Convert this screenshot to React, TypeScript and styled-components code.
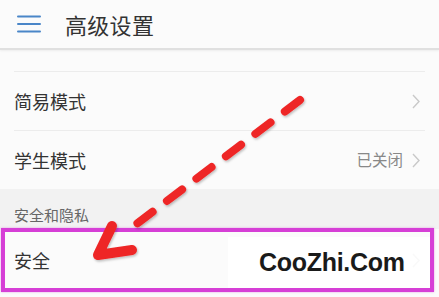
import React from "react";
import styled, { createGlobalStyle } from "styled-components";

const Global = createGlobalStyle`
  html, body { margin: 0; padding: 0; background: #fbfbfb; }
  body { font-family: "Noto Sans CJK SC", "Noto Sans", sans-serif; }
`;

const Page = styled.div`
  position: relative;
  width: 439px;
  height: 297px;
  overflow: hidden;
  background: #fbfbfb;
`;

const Header = styled.header`
  height: 48px;
  display: flex;
  align-items: center;
  padding-left: 17px;
  gap: 24px;
  border-bottom: 2px solid #e0e0e0;
  box-shadow: 0 1px 2px rgba(0, 0, 0, 0.06);
  background: #fbfbfb;
  position: relative;
  z-index: 1;
`;

const Title = styled.h1`
  margin: 0;
  font-size: 22px;
  font-weight: 400;
  color: #333;
  line-height: 1;
  letter-spacing: 0.3px;
`;

const Clip = styled.div`
  height: 22px;
  overflow: hidden;
  display: flex;
  flex-direction: column;
  justify-content: flex-end;
`;

const Row = styled.div<{ $divider?: boolean; $h?: number }>`
  flex: none;
  height: ${(p) => p.$h ?? 58}px;
  margin: 0 14px;
  padding-right: 5px;
  display: flex;
  align-items: center;
  border-bottom: ${(p) => (p.$divider ? "1px solid #ececec" : "none")};
`;

const Label = styled.span`
  flex: 1;
  font-size: 18px;
  color: #333;
  line-height: 1;
`;

const Value = styled.span`
  font-size: 15.5px;
  color: #888;
  margin-right: 9px;
  line-height: 1;
`;

const Section = styled.div`
  height: 40px;
  background: #f2f2f2;
  display: flex;
  align-items: flex-end;
  padding: 0 14px 4px;
  box-sizing: border-box;
  font-size: 15px;
  line-height: 20px;
  color: #666;
`;

const Frame = styled.div`
  position: absolute;
  left: 1px;
  top: 228px;
  width: 433px;
  height: 64px;
  box-sizing: border-box;
  border: 4px solid #d63fd6;
  box-shadow: 0 0 2px rgba(214, 63, 214, 0.5);
  pointer-events: none;
`;

const Watermark = styled.div`
  position: absolute;
  left: 228px;
  top: 237px;
  width: 202px;
  height: 51px;
  background: rgba(255, 255, 255, 0.88);
  display: flex;
  align-items: center;
  padding-left: 31px;
  box-sizing: border-box;
  font-family: "Liberation Sans", Arial, sans-serif;
  font-weight: 700;
  font-size: 25px;
  color: #1a1a1a;
  letter-spacing: -0.3px;
`;

const Overlay = styled.svg`
  position: absolute;
  left: 0;
  top: 0;
  pointer-events: none;
`;

const MenuIcon = () => (
  <svg width="24" height="18" viewBox="0 0 24 18">
    <g stroke="#4a86c8" strokeWidth="2" strokeLinecap="round">
      <line x1="1" y1="1.5" x2="23" y2="1.5" />
      <line x1="1" y1="9" x2="23" y2="9" />
      <line x1="1" y1="16.5" x2="23" y2="16.5" />
    </g>
  </svg>
);

const Chevron = () => (
  <svg width="8" height="15" viewBox="0 0 8 15">
    <polyline points="1,1 7,7.5 1,14" fill="none" stroke="#c9c9c9" strokeWidth="1.4" />
  </svg>
);

export default function App() {
  return (
    <>
      <Global />
      <Page>
        <Header>
          <MenuIcon />
          <Title>高级设置</Title>
        </Header>
        <Clip aria-hidden="true">
          <Row $divider $h={64}>
            <Label>悬浮按钮</Label>
          </Row>
        </Clip>
        <Row $divider>
          <Label>简易模式</Label>
          <Chevron />
        </Row>
        <Row>
          <Label>学生模式</Label>
          <Value>已关闭</Value>
          <Chevron />
        </Row>
        <Section>安全和隐私</Section>
        <Row $h={62}>
          <Label>安全</Label>
          <Chevron />
        </Row>
        <Frame />
        <Watermark>CooZhi.Com</Watermark>
        <Overlay width="439" height="297" viewBox="0 0 439 297">
          <defs>
            <filter id="sh" x="-20%" y="-20%" width="140%" height="140%">
              <feDropShadow dx="1" dy="1.5" stdDeviation="1.2" floodColor="#000" floodOpacity="0.25" />
            </filter>
          </defs>
          <g filter="url(#sh)" stroke="#ee2626" fill="none" strokeLinecap="round" strokeLinejoin="round">
            <line x1="300" y1="100" x2="126" y2="232" strokeWidth="8" strokeDasharray="19 18" />
            <polyline points="112,226 98,255 132,250" strokeWidth="10" />
          </g>
        </Overlay>
      </Page>
    </>
  );
}
